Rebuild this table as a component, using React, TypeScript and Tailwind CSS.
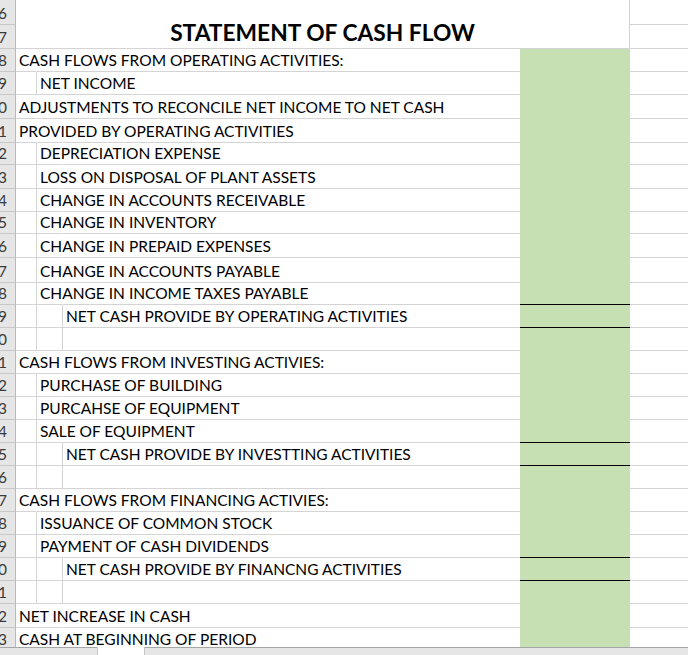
import React from 'react';

type Col = 'B' | 'C' | 'D' | null;

interface Row {
  n: number;
  h: number;
  text?: string;
  col?: Col;
  black?: boolean;
}

const rows: Row[] = [
  { n: 8, h: 23, text: 'CASH FLOWS FROM OPERATING ACTIVITIES:', col: 'B' },
  { n: 9, h: 23, text: 'NET INCOME', col: 'C' },
  { n: 10, h: 24, text: 'ADJUSTMENTS TO RECONCILE NET INCOME TO NET CASH', col: 'B' },
  { n: 11, h: 24, text: 'PROVIDED BY OPERATING ACTIVITIES', col: 'B' },
  { n: 12, h: 22, text: 'DEPRECIATION EXPENSE', col: 'C' },
  { n: 13, h: 24, text: 'LOSS ON DISPOSAL OF PLANT ASSETS', col: 'C' },
  { n: 14, h: 23, text: 'CHANGE IN ACCOUNTS RECEIVABLE', col: 'C' },
  { n: 15, h: 22, text: 'CHANGE IN INVENTORY', col: 'C' },
  { n: 16, h: 24, text: 'CHANGE IN PREPAID EXPENSES', col: 'C' },
  { n: 17, h: 25, text: 'CHANGE IN ACCOUNTS PAYABLE', col: 'C' },
  { n: 18, h: 22, text: 'CHANGE IN INCOME TAXES PAYABLE', col: 'C', black: true },
  { n: 19, h: 23, text: 'NET CASH PROVIDE BY OPERATING ACTIVITIES', col: 'D', black: true },
  { n: 20, h: 23, col: null },
  { n: 21, h: 23, text: 'CASH FLOWS FROM INVESTING ACTIVIES:', col: 'B' },
  { n: 22, h: 23, text: 'PURCHASE OF BUILDING', col: 'C' },
  { n: 23, h: 23, text: 'PURCAHSE OF EQUIPMENT', col: 'C' },
  { n: 24, h: 23, text: 'SALE OF EQUIPMENT', col: 'C', black: true },
  { n: 25, h: 23, text: 'NET CASH PROVIDE BY INVESTTING ACTIVITIES', col: 'D', black: true },
  { n: 26, h: 23, col: null },
  { n: 27, h: 23, text: 'CASH FLOWS FROM FINANCING ACTIVIES:', col: 'B' },
  { n: 28, h: 23, text: 'ISSUANCE OF COMMON STOCK', col: 'C' },
  { n: 29, h: 23, text: 'PAYMENT OF CASH DIVIDENDS', col: 'C', black: true },
  { n: 30, h: 23, text: 'NET CASH PROVIDE BY FINANCNG ACTIVITIES', col: 'D', black: true },
  { n: 31, h: 23, col: null },
  { n: 32, h: 24, text: 'NET INCREASE IN CASH', col: 'B' },
  { n: 33, h: 23, text: 'CASH AT BEGINNING OF PERIOD', col: 'B' },
];

// row number header, clipped on the left like the scrolled sheet
const RowHead = ({ n }: { n: number }) => (
  <div className="w-[16px] shrink-0 h-full overflow-hidden flex justify-end items-end bg-[#e6e6e6] border-r border-b border-r-[#b9b9b9] border-b-[#c8c8c8] text-[#3a3a3a]">
    <span className="whitespace-nowrap pr-[8px] pb-[2px] leading-[18px]">{n}</span>
  </div>
);

const Txt = ({ children }: { children: React.ReactNode }) => (
  <span className="whitespace-nowrap pl-[3px] pb-[2px] leading-[18px]">{children}</span>
);

const SheetRow = ({ r }: { r: Row }) => {
  const lineB = r.col !== 'B';
  const lineC = r.col === 'D' || r.col === null;
  return (
    <div className="flex shrink-0" style={{ height: r.h }}>
      <RowHead n={r.n} />
      <div
        className={`w-[21px] shrink-0 flex items-end border-b border-b-[#d4d4d4] border-r ${
          lineB ? 'border-r-[#d4d4d4]' : 'border-r-transparent'
        }`}
      >
        {r.col === 'B' && <Txt>{r.text}</Txt>}
      </div>
      <div
        className={`w-[26px] shrink-0 flex items-end border-b border-b-[#d4d4d4] border-r ${
          lineC ? 'border-r-[#d4d4d4]' : 'border-r-transparent'
        }`}
      >
        {r.col === 'C' && <Txt>{r.text}</Txt>}
      </div>
      <div className="w-[457px] shrink-0 flex items-end border-b border-b-[#d4d4d4]">
        {r.col === 'D' && <Txt>{r.text}</Txt>}
      </div>
      <div
        className={`w-[110px] shrink-0 bg-[#c6e0b4] border-b ${
          r.black ? 'border-b-black' : 'border-b-[#c6e0b4]'
        }`}
      />
      <div className="flex-1 border-b border-b-[#d4d4d4]" />
    </div>
  );
};

export default function App() {
  return (
    <div className="w-[688px] h-[655px] overflow-hidden bg-white text-black text-[15.5px] font-['Lato',sans-serif] flex flex-col">
      <div className="h-[647px] overflow-hidden flex flex-col">
        {/* row 6 */}
        <div className="flex shrink-0 h-[25px]">
          <RowHead n={6} />
          <div className="w-[614px] shrink-0 border-r border-r-[#d4d4d4]" />
          <div className="flex-1 border-b border-b-[#d4d4d4]" />
        </div>
        {/* row 7 - title */}
        <div className="flex shrink-0 h-[24px]">
          <RowHead n={7} />
          <div className="w-[614px] shrink-0 flex items-end justify-center border-b border-r border-[#d4d4d4]">
            <span className="whitespace-nowrap font-bold text-[22.75px] leading-[27px] pb-[2px]">
              STATEMENT OF CASH FLOW
            </span>
          </div>
          <div className="flex-1 border-b border-b-[#d4d4d4]" />
        </div>
        {rows.map(r => (
          <SheetRow key={r.n} r={r} />
        ))}
      </div>
      {/* sheet tab strip */}
      <div className="flex h-[8px] shrink-0">
        <div className="w-[97px] bg-[#e6e6e6] border-t border-t-[#a6a6a6]" />
        <div className="w-[48px] bg-white border-x border-x-[#c6c6c6]" />
        <div className="flex-1 bg-[#e6e6e6] border-t border-t-[#a6a6a6]" />
      </div>
    </div>
  );
}
